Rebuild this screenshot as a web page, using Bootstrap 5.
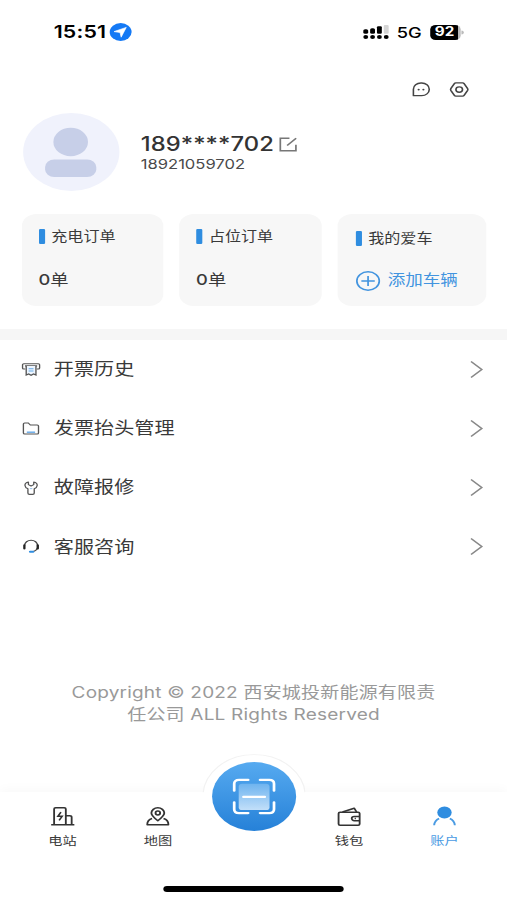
<!DOCTYPE html>
<html lang="zh-CN">
<head>
<meta charset="utf-8">
<meta name="viewport" content="width=device-width, initial-scale=1">
<title>账户</title>
<link href="https://cdn.jsdelivr.net/npm/bootstrap@5.3.0/dist/css/bootstrap.min.css" rel="stylesheet">
<style>
html,body{overflow:hidden;background:#fff}
body{font-family:Inter,"Noto Sans CJK SC",sans-serif;color:#3a3a3a;line-height:1}
svg{display:block;flex:none;overflow:visible}
/* The layout is 416px wide and stretched to the 507px window */
.screen{width:416px;height:900px;transform:scaleX(1.21875);transform-origin:0 0}
.status{height:64px;padding-left:44px;padding-right:36px;color:#000}
.clock{font-size:17.5px;font-weight:600;letter-spacing:.15px;margin-right:3.2px}
.net{font-size:15px;font-weight:500;margin-left:6.5px}
.battery{width:25.5px;height:15px;border-radius:4.5px;background:linear-gradient(90deg,#000 91%,#bbb 91%);color:#fff;font-size:12.5px;font-weight:700;padding:1px 1px 0 0;margin-left:6.5px}
.tools{height:49px;padding-top:2px;padding-right:31px;gap:16px}
.profile{height:78px;padding-left:18.5px;gap:18px}
.names{padding-top:3px;gap:3.5px}
.avatar{width:79px;height:78px;background:#f0f2fc}
.phone{font-size:19.5px;font-weight:500;letter-spacing:.05px;gap:4.5px;color:#333}
.phone-full{font-size:13.6px;color:#4a4a4a}
.tiles{padding:22.5px 17.5px 0 18px;height:137.5px;gap:13px}
.tile{height:92.5px;border-radius:12px;background:#f7f7f7;padding-left:13.6px}
.tile-orders{width:116.3px}
.tile-title{font-size:13.2px;gap:5.5px;padding-top:15.5px}
.tile-title::before{content:"";width:5px;height:15px;border-radius:1px;background:#2f8de0}
.tile-value{font-size:15px;padding-top:27.5px}
.tile-value b{font-weight:500}
.third{padding-left:15px}
.third .tile-title{padding-top:17.5px}
.add{color:#4294df;font-size:14.4px;gap:6.5px;padding-top:24.5px}
.band{height:11px;background:#f6f6f6}
.line{height:59.1px;padding:1px 20px 0 18px;font-size:16.5px}
.line svg:first-child{margin-right:11.2px}
.legal{height:216.4px;padding-top:106px;font-size:15.6px;line-height:22.5px;color:#999;text-align:center;letter-spacing:.16px}
.tabs{position:relative;z-index:0;height:107.6px;padding:0 12px;background:#fff;box-shadow:0 -2px 10px rgba(0,0,0,.03)}
.tab{flex:1 1 0;height:61px;padding-top:13.5px;gap:10.2px;font-size:11.7px}
.tab-on{color:#4a9be3}
.scan{position:relative;width:69px;height:69px;margin-top:-30px;background:linear-gradient(#56aaf0,#2681d8)}
/* White hump that rises above the bar behind the scan button */
.scan::before{content:"";position:absolute;inset:-8px;border-radius:50%;background:#fff;border:1px solid #f2f2f2;clip-path:inset(0 0 47px 0);z-index:-1}
.home{width:147.5px;height:5.5px;border-radius:3px;background:#000;margin-top:33px}
</style>
<script src="https://cdn.jsdelivr.net/npm/bootstrap@5.3.0/dist/js/bootstrap.bundle.min.js"></script>
</head>
<body>
<div class="screen d-flex flex-column">
  <header class="status d-flex align-items-center">
    <span class="clock">15:51</span>
    <svg width="18" height="18" viewBox="0 0 18 18"><circle cx="9" cy="9" r="9" fill="#1479f5"/><path d="M3.600 8.600 13.600 4.400 9.400 14.200 8.500 9.500Z" fill="#fff" stroke="#fff" stroke-width=".6" stroke-linejoin="round"/></svg>
    <svg class="ms-auto" width="21" height="14" viewBox="0 0 21 14"><g fill="#000"><circle cx="2.100" cy="12" r="2"/><circle cx="7.700" cy="12" r="2"/><circle cx="13.300" cy="12" r="2"/><circle cx="18.900" cy="12" r="2"/><rect x=".1" y="4.200" width="4" height="4.600" rx="1.500"/><rect x="5.700" y="3.200" width="4" height="5.600" rx="1.500"/><rect x="11.300" y="1.200" width="4" height="7.600" rx="1"/></g><rect x="16.900" y="0" width="4" height="8.800" rx="1" fill="#d5d5d5"/></svg>
    <span class="net">5G</span>
    <span class="battery d-flex align-items-center justify-content-center">92</span>
    <svg width="2" height="5" viewBox="0 0 2 5"><path d="M.6 .5a2 2 0 0 1 0 4Z" fill="#bbb"/></svg>
  </header>

  <div class="tools d-flex align-items-center justify-content-end">
    <svg width="15" height="15" viewBox="0 0 15 15" fill="none" stroke="#444" stroke-width="1.300"><path d="M1.200 13.700V7.200A6.200 6.200 0 0 1 7.400 1H8a6.200 6.200 0 0 1 6.200 6.200v.3A6.200 6.200 0 0 1 8 13.700Z" stroke-linejoin="round"/><circle cx="5.500" cy="7.600" r=".9" fill="#444" stroke="none"/><circle cx="9.400" cy="7.600" r=".9" fill="#444" stroke="none"/></svg>
    <svg width="16" height="15" viewBox="0 0 16 15" fill="none" stroke="#444" stroke-width="1.350" stroke-linejoin="round"><path d="M5 .9h5.600q.8 0 1.200.7l2.900 5.100q.4.800 0 1.600l-2.900 5.100q-.4.700-1.200.7H5q-.8 0-1.200-.7L.9 8.300q-.4-.8 0-1.600l2.900-5.100Q4.200.9 5 .9Z"/><circle cx="7.800" cy="7.500" r="2.700"/></svg>
  </div>

  <section class="profile d-flex align-items-center">
    <div class="avatar rounded-circle d-flex align-items-center justify-content-center">
      <svg width="42" height="49" viewBox="0 0 42 49"><circle cx="21" cy="14" r="14.200" fill="#c7cfe8"/><rect x="0" y="31.500" width="42" height="17.500" rx="7.500" fill="#c7cfe8"/></svg>
    </div>
    <div class="names d-flex flex-column">
      <div class="phone d-flex align-items-center"><span>189****702</span>
        <svg width="15" height="15" viewBox="0 0 15 15" fill="none" stroke="#777" stroke-width="1.400"><path d="M8.500 1.200H1v12.600h12.800V7.800M6.600 8.600 14 1.200"/></svg>
      </div>
      <span class="phone-full">18921059702</span>
    </div>
  </section>

  <section class="tiles d-flex">
    <div class="tile tile-orders"><div class="tile-title d-flex align-items-center">充电订单</div><div class="tile-value"><b>0</b>单</div></div>
    <div class="tile tile-orders"><div class="tile-title d-flex align-items-center">占位订单</div><div class="tile-value"><b>0</b>单</div></div>
    <div class="tile third flex-fill"><div class="tile-title d-flex align-items-center">我的爱车</div>
      <div class="add d-flex align-items-center"><svg width="20" height="20" viewBox="0 0 20 20" fill="none" stroke="#4294df" stroke-width="1.400"><circle cx="10" cy="10" r="9.200"/><path d="M10 5v10M4.500 10h11"/></svg><span>添加车辆</span></div></div>
  </section>

  <div class="band"></div>

  <main>
    <div class="line d-flex align-items-center">
      <svg width="15" height="13" viewBox="0 0 15 13" fill="none" stroke="#555" stroke-width="1.100"><path d="M2.800 6H1.500a1 1 0 0 1-1-1V1.800a1 1 0 0 1 1-1h12a1 1 0 0 1 1 1V5a1 1 0 0 1-1 1h-1.300M2.500 2.900h10"/><path d="M3.500 3v9l2-1 2 1.300 2-1.300 2 1V3" fill="#eef6ff"/><path d="M5.500 5.800h4M5.500 8h4" stroke="#65a9e8"/></svg>
      <span>开票历史</span>
      <svg class="ms-auto" width="10" height="17" viewBox="0 0 10 17" fill="none" stroke="#888" stroke-width="1.400"><path d="M.5.500 9.300 8.500.5 16.500"/></svg>
    </div>
    <div class="line d-flex align-items-center">
      <svg width="15" height="13" viewBox="0 0 15 13" fill="none" stroke="#555" stroke-width="1.100"><path d="M1.200 11V2q0-1 1-1h3l1.700 2h5.700q1 0 1 1v7q0 1-1 1H2.200q-1 0-1-1Z"/><path d="M4 10.200h6.800" stroke="#65a9e8" stroke-width="1.400"/></svg>
      <span>发票抬头管理</span>
      <svg class="ms-auto" width="10" height="17" viewBox="0 0 10 17" fill="none" stroke="#888" stroke-width="1.400"><path d="M.5.500 9.300 8.500.5 16.500"/></svg>
    </div>
    <div class="line d-flex align-items-center">
      <svg width="15" height="14" viewBox="0 0 15 14" fill="none" stroke="#555" stroke-width="1.100" stroke-linejoin="round"><path d="M5.300 1v2.600L7.500 5l2.200-1.400V1C11.600 1.400 12.600 2.700 12.500 4.500c-.1 1.500-1 2.600-2.400 3.300v4.300q0 1.300-1.200 1.300H6.100q-1.200 0-1.200-1.300V7.800C3.500 7.100 2.600 6 2.500 4.500 2.400 2.700 3.400 1.400 5.300 1Z"/><path d="M6.500 7.600h2" stroke="#9bc3ea"/></svg>
      <span>故障报修</span>
      <svg class="ms-auto" width="10" height="17" viewBox="0 0 10 17" fill="none" stroke="#888" stroke-width="1.400"><path d="M.5.500 9.300 8.500.5 16.500"/></svg>
    </div>
    <div class="line d-flex align-items-center">
      <svg width="15" height="13" viewBox="0 0 15 13" fill="none" stroke="#444" stroke-width="1.100"><path d="M2.200 5.500a5.300 5.300 0 0 1 10.600 0v2.200q-.5 2.800-3.500 3.800"/><path d="M2 5.200v3.300M13 5.200v3.300" stroke="#222" stroke-width="1.900" stroke-linecap="round"/><path d="M6.700 11.700h2.500" stroke="#2f8de0" stroke-width="2" stroke-linecap="round"/></svg>
      <span>客服咨询</span>
      <svg class="ms-auto" width="10" height="17" viewBox="0 0 10 17" fill="none" stroke="#888" stroke-width="1.400"><path d="M.5.500 9.300 8.500.5 16.500"/></svg>
    </div>
  </main>

  <footer class="legal">Copyright © 2022 西安城投新能源有限责<br>任公司 ALL Rights Reserved</footer>

  <nav class="tabs">
    <div class="d-flex">
      <div class="tab d-flex flex-column align-items-center">
        <svg width="19" height="20" viewBox="0 0 19 20" fill="none" stroke="#333" stroke-width="1.500"><path d="M0 18.700h19M2.400 18.500V3q0-1.200 1.200-1.200h7.200Q12 1.800 12 3v15.500M12 9.700h3.300q1.500 0 1.500 1.500v7.300"/><path d="M8 6.200 5.500 10.300H9L6.500 14.300" stroke-width="1.400"/></svg>
        <span>电站</span>
      </div>
      <div class="tab d-flex flex-column align-items-center">
        <svg width="19" height="20" viewBox="0 0 19 20" fill="none" stroke="#333" stroke-width="1.500" stroke-linejoin="round"><path d="M9.500 14.800C6.500 12 4.200 9.600 4.200 7.100a5.300 5.300 0 0 1 10.600 0c0 2.500-2.300 4.900-5.300 7.700Z"/><circle cx="9.500" cy="7" r="1.900"/><path d="M4.800 12.500C2.500 13.300.8 15.500.8 18.700h17.400c0-3.200-1.700-5.400-4-6.200"/></svg>
        <span>地图</span>
      </div>
      <div class="tab pt-0 d-flex flex-column align-items-center">
        <div class="scan rounded-circle d-flex align-items-center justify-content-center flex-shrink-0">
          <svg width="35" height="35" viewBox="0 0 36 36" fill="none"><defs><linearGradient id="pane" x2="0" y2="1"><stop stop-color="#6fb4ef"/><stop offset="1" stop-color="#c2dff9"/></linearGradient></defs><rect x="5" y="5" width="26" height="27" rx="3" fill="url(#pane)"/><g stroke="#fff" stroke-width="2.300" stroke-linecap="round"><path d="M1.200 12V5q0-4 4-4H13M23 1h7.800q4 0 4 4v7M1.200 24v7q0 4 4 4H13M23 35h7.800q4 0 4-4v-7M9 18.500h18"/></g></svg>
        </div>
      </div>
      <div class="tab d-flex flex-column align-items-center">
        <svg width="19" height="20" viewBox="0 0 19 20" fill="none" stroke="#333" stroke-width="1.500" stroke-linejoin="round"><rect x=".8" y="6.300" width="17.300" height="12.900" rx="1.200"/><path d="M4 6 13.600 2.200 15.600 6M18 10.500h-4.300a2 2 0 0 0 0 4.200H18M14 12.600h1"/></svg>
        <span>钱包</span>
      </div>
      <div class="tab tab-on d-flex flex-column align-items-center">
        <svg width="19" height="20" viewBox="0 0 19 20" fill="none"><circle cx="9.700" cy="6.500" r="5.900" fill="#2f8de0"/><path d="M1.200 19.200q.4-4.600 4.100-6.700M18.200 19.200q-.4-4.600-4.100-6.700" stroke="#4a9be3" stroke-width="1.600"/></svg>
        <span>账户</span>
      </div>
    </div>
    <div class="home mx-auto"></div>
  </nav>
</div>
</body>
</html>
